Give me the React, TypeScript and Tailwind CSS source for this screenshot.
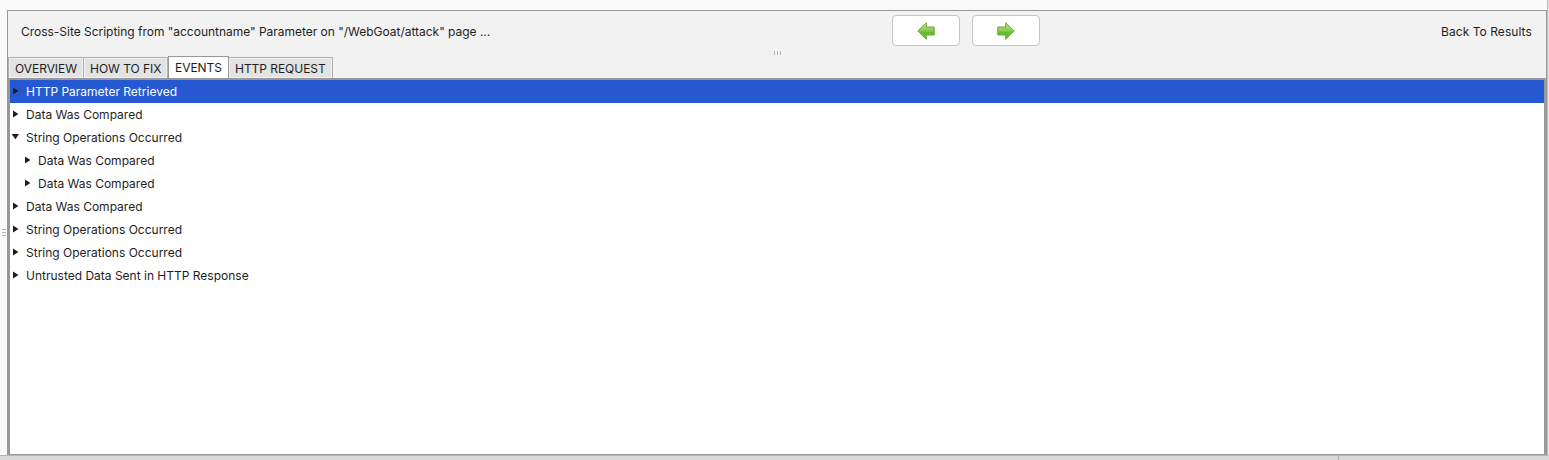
type Row = { label: string; open?: boolean; nested?: boolean; selected?: boolean };

const rows: Row[] = [
  { label: "HTTP Parameter Retrieved", selected: true },
  { label: "Data Was Compared" },
  { label: "String Operations Occurred", open: true },
  { label: "Data Was Compared", nested: true },
  { label: "Data Was Compared", nested: true },
  { label: "Data Was Compared" },
  { label: "String Operations Occurred" },
  { label: "String Operations Occurred" },
  { label: "Untrusted Data Sent in HTTP Response" },
];

function Disclosure({ open }: { open?: boolean }) {
  return (
    <svg width="8" height="8" viewBox="0 0 8 8" className="mb-[2px] shrink-0" fill="#1e1e1e">
      {open ? <path d="M.7 1h7.3L4.4 6.3z" /> : <path d="M2 .4v7.2L7.4 4z" />}
    </svg>
  );
}

function Arrow({ right }: { right?: boolean }) {
  return (
    <svg width="18" height="18" viewBox="0 0 18 18" className={right ? "-scale-x-100" : ""}>
      <defs>
        <linearGradient id="leaf" x1="0" y1="0" x2="0" y2="1">
          <stop offset="0" stopColor="#b5e28b" />
          <stop offset=".45" stopColor="#8bce55" />
          <stop offset=".6" stopColor="#66b92f" />
          <stop offset="1" stopColor="#78c840" />
        </linearGradient>
      </defs>
      <path d="M.8 9 9.3 .7V5H17.2v8H9.3v4.3z" fill="url(#leaf)" stroke="#68a93f" strokeWidth="1" strokeLinejoin="round" />
    </svg>
  );
}

function NavButton({ right }: { right?: boolean }) {
  return (
    <button
      aria-label={right ? "Next" : "Previous"}
      className="flex h-[31px] w-[68px] items-center justify-center rounded-[4px] border border-[#c6c6c6] bg-white"
    >
      <Arrow right={right} />
    </button>
  );
}

function Tab({ label, width }: { label: string; width: string }) {
  return (
    <div className={`${width} h-[21px] border-t border-r border-[#b0b0b0] bg-[#f0f0f0] p-px`}>
      <div className="h-full bg-[#e3e3e3] pl-[5px] leading-[19px] tracking-[-0.04px] whitespace-nowrap">{label}</div>
    </div>
  );
}

export default function App() {
  return (
    <div className="flex h-[460px] w-[1549px] flex-col overflow-hidden bg-[#f9f9f9] font-['Inter',sans-serif] text-[12px] text-[#1e1e1e]">
      <div className="flex h-[455px]">
        <div className="flex w-[7px] flex-col gap-[2px] pt-[229px] pl-[2px]">
          <div className="h-px w-[4px] bg-[#b5b5b5]" />
          <div className="h-px w-[4px] bg-[#b5b5b5]" />
          <div className="h-px w-[4px] bg-[#b5b5b5]" />
        </div>
        <div className="flex w-[1540px] flex-col pt-[10px]">
          <div className="flex h-[68px] flex-col border border-b-0 border-[#989898] bg-[#f2f2f2]">
            <div className="flex h-[40px] items-start pl-[13px]">
              <div className="w-[871px] pt-[12px] leading-[18px] tracking-[-0.02px]">
                Cross-Site Scripting from "accountname" Parameter on "/WebGoat/attack" page ...
              </div>
              <div className="flex w-[549px] gap-[12px] pt-[4px]">
                <NavButton />
                <NavButton right />
              </div>
              <div className="pt-[12px] leading-[18px] tracking-[0.06px] whitespace-nowrap">Back To Results</div>
            </div>
            <div className="flex h-[5px] gap-[2px] pl-[766px]">
              <div className="h-[4px] w-px bg-[#b5b5b5]" />
              <div className="h-[4px] w-px bg-[#b5b5b5]" />
              <div className="h-[4px] w-px bg-[#b5b5b5]" />
            </div>
            <div className="flex h-[22px] items-end">
              <div className="h-[21px] w-px bg-[#b0b0b0]" />
              <Tab label="OVERVIEW" width="w-[75px]" />
              <Tab label="HOW TO FIX" width="w-[84px]" />
              <div className="-mb-px h-[23px] w-[61px] border border-b-0 border-[#989898] bg-white pl-[6px] leading-[22px] tracking-[-0.04px]">
                EVENTS
              </div>
              <Tab label="HTTP REQUEST" width="w-[104px]" />
            </div>
          </div>
          <div className="h-[377px] border-x-[3px] border-t-2 border-b border-[#989898] bg-white">
            {rows.map((row, i) => (
              <div
                key={i}
                className={`flex h-[23px] items-center gap-[7px] ${row.nested ? "pl-[13px]" : "pl-px"} ${
                  row.selected ? "bg-[#2658d2]" : ""
                }`}
              >
                <Disclosure open={row.open} />
                <span className={`leading-[23px] ${row.selected ? "text-white" : ""}`}>{row.label}</span>
              </div>
            ))}
          </div>
        </div>
        <div className="w-[2px] border-l border-[#c0c0c0] bg-[#e4e4e4]" />
      </div>
      <div className="h-[5px] border-t border-[#b5b5b5] bg-[#d8d8d8]">
        <div className="ml-[1338px] h-full w-px bg-[#b0b0b0]" />
      </div>
    </div>
  );
}
